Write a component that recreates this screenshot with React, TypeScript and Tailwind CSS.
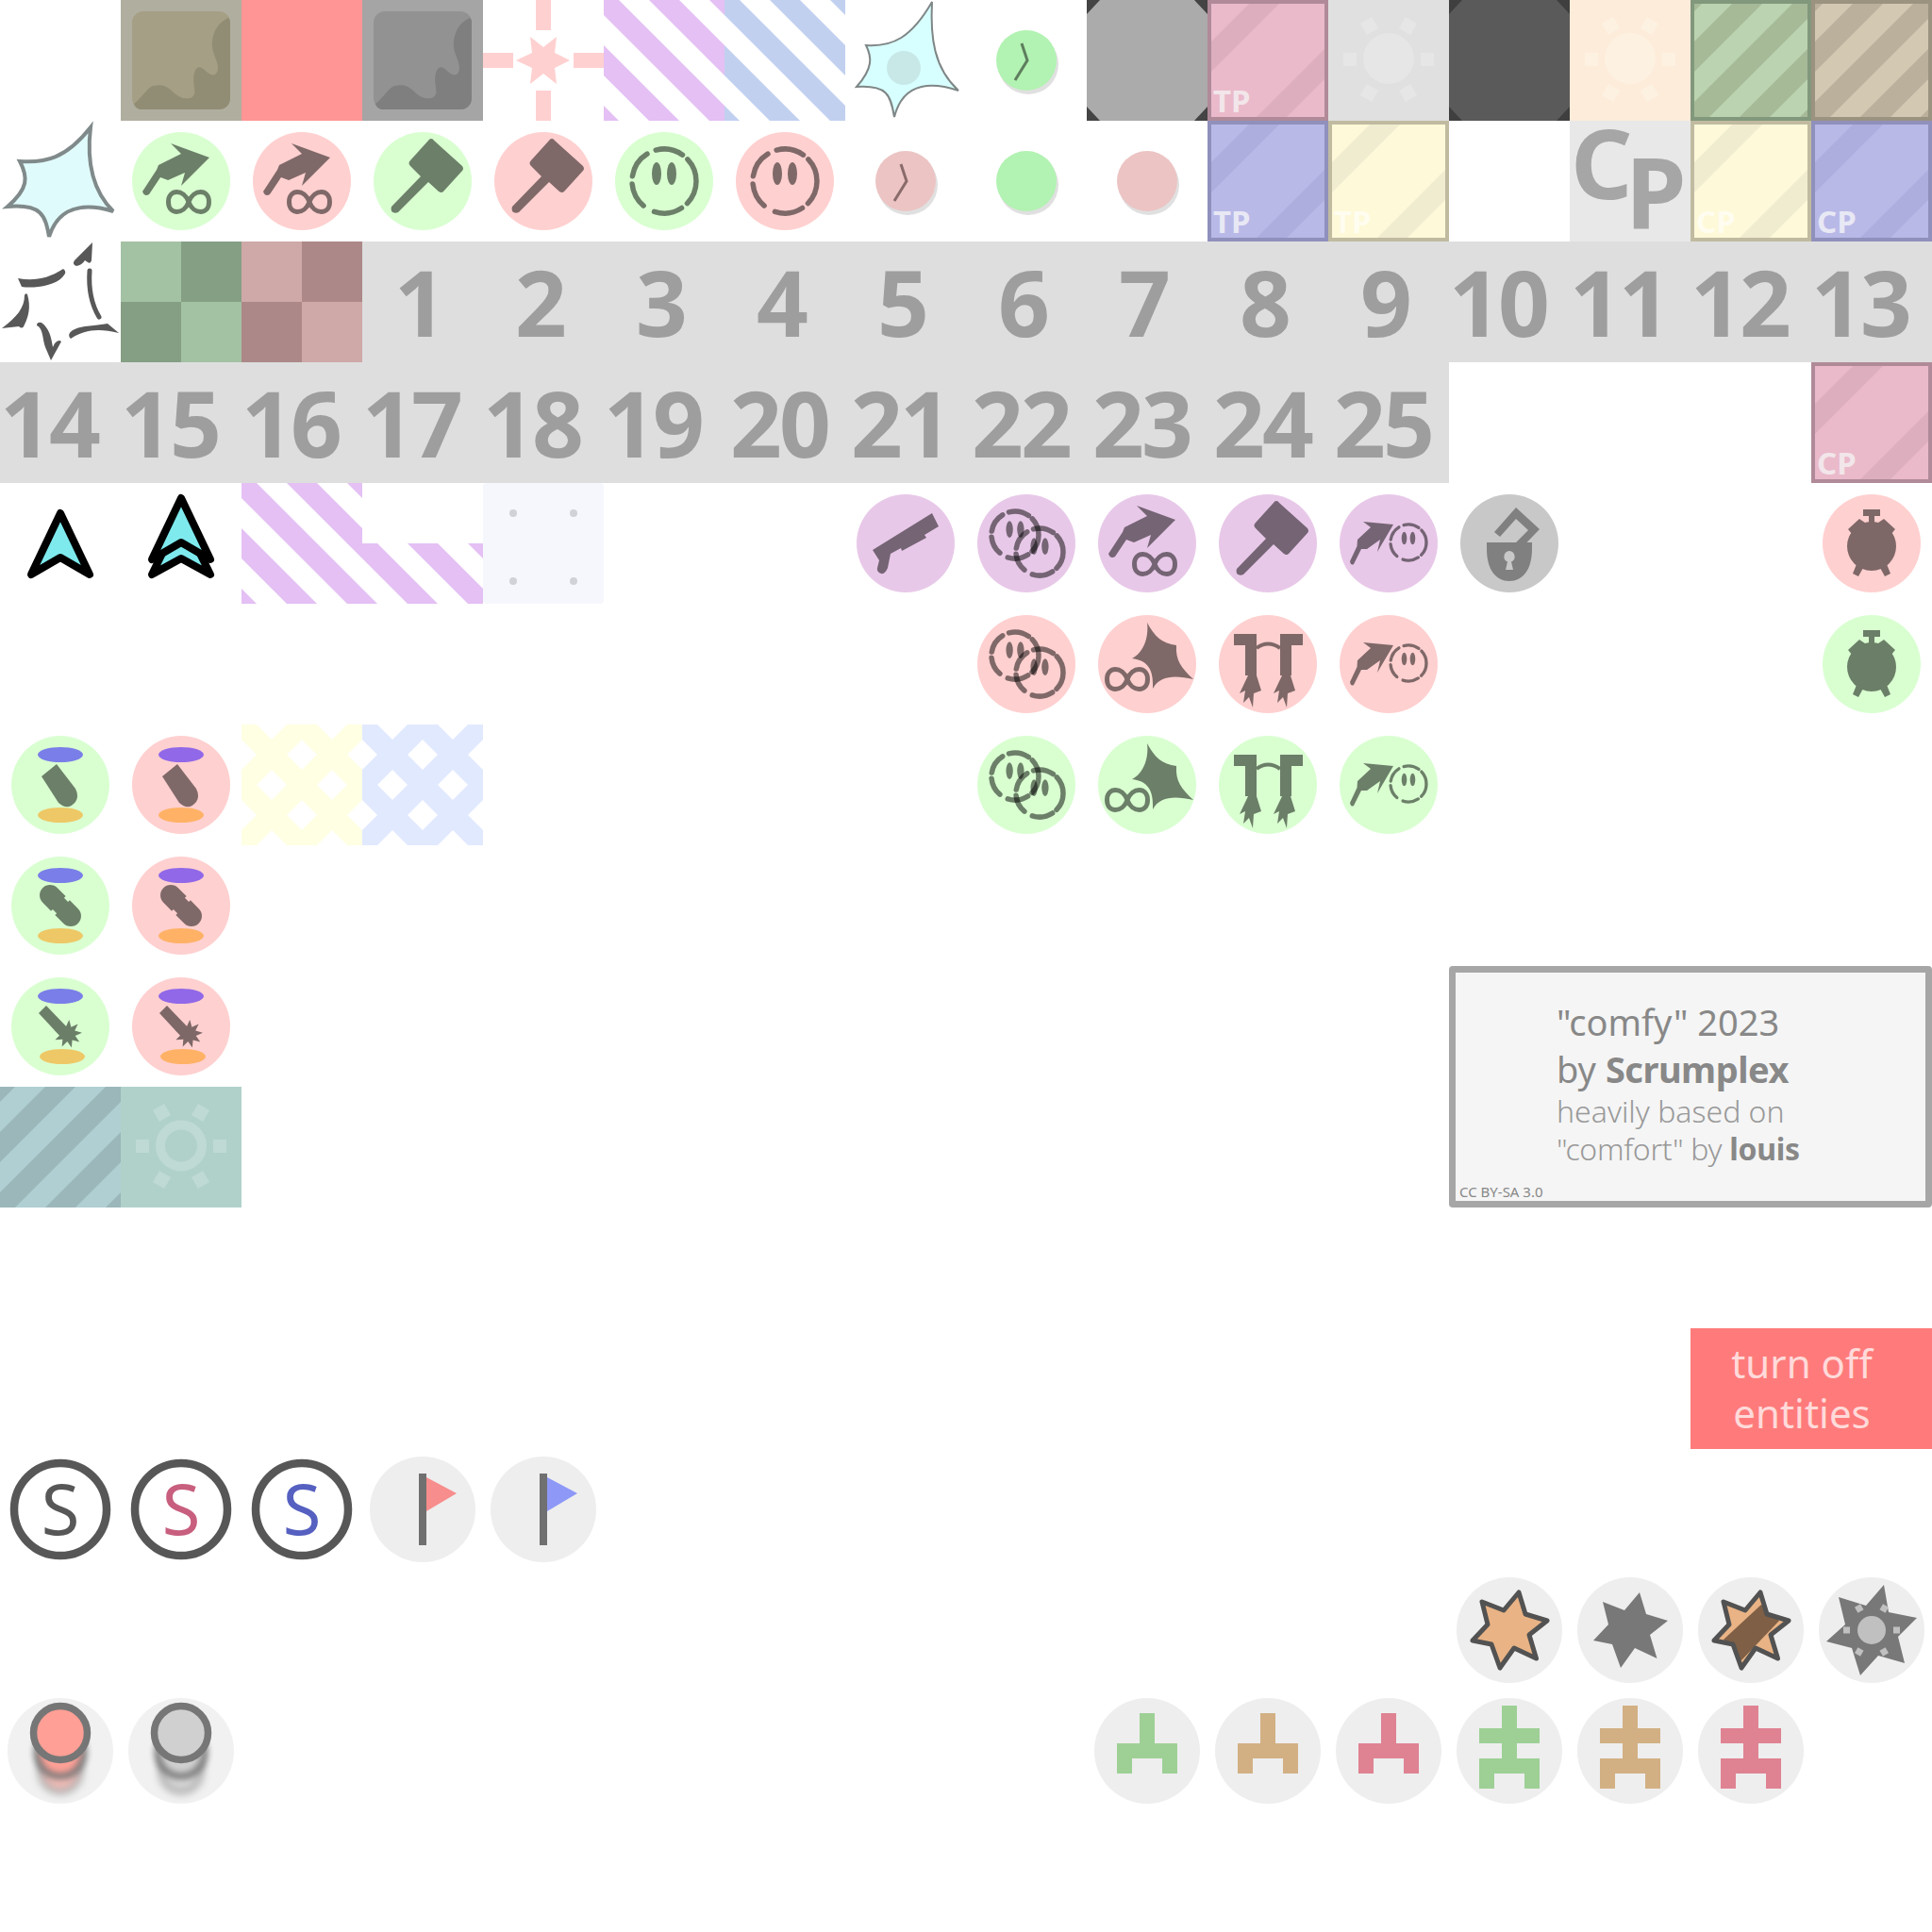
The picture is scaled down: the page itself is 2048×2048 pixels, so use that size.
import React from "react";

type P = { pos: string; children?: React.ReactNode };
const Art = ({ pos, children }: P) => (
  <svg viewBox="0 0 128 128" className={`block w-32 h-32 overflow-hidden ${pos}`}>{children}</svg>
);

const pol = (cx: number, cy: number, r: number, deg: number) => {
  const a = (deg * Math.PI) / 180;
  return [cx + r * Math.sin(a), cy - r * Math.cos(a)];
};
const arc = (cx: number, cy: number, r: number, a0: number, a1: number) => {
  const [x0, y0] = pol(cx, cy, r, a0);
  const [x1, y1] = pol(cx, cy, r, a1);
  return `M${x0} ${y0}A${r} ${r} 0 ${a1 - a0 > 180 ? 1 : 0} 1 ${x1} ${y1}`;
};
const burst = (cx: number, cy: number, R: number, r: number, n: number, rot = 0) =>
  Array.from({ length: n * 2 }, (_, i) => pol(cx, cy, i % 2 ? r : R, rot + (i * 180) / n).join(",")).join(" ");

const Lines = ({ c, dir, offs = [-128, -64, 0, 64, 128], w = 22.63 }: { c: string; dir: "down" | "up"; offs?: number[]; w?: number }) => (
  <g stroke={c} strokeWidth={w} fill="none">
    {offs.map((o) =>
      dir === "down" ? (
        <line key={o} x1={o - 20} y1={-20} x2={o + 148} y2={148} />
      ) : (
        <line key={o} x1={o + 20} y1={-20} x2={o - 148} y2={148} />
      ),
    )}
  </g>
);

const Sun = ({ c, ring, op = 1 }: { c: string; ring?: boolean; op?: number }) => (
  <g fill={c} opacity={op}>
    {ring ? (
      <circle cx={64} cy={62.5} r={22} fill="none" stroke={c} strokeWidth={10} />
    ) : (
      <circle cx={64} cy={62} r={27} />
    )}
    {[0, 60, 120, 180, 240, 300].map((a) => (
      <rect key={a} x={57} y={15} width={14} height={14} transform={`rotate(${a + 90} 64 63)`} />
    ))}
  </g>
);

const Disc = ({ c, r = 52 }: { c: string; r?: number }) => <circle cx={64} cy={64} r={r} fill={c} />;

const HAND = "M53 24L94 39L64 69L68 55L50 63L42 60L30 78Q25 81 23 75L38 52L40 47L64 35Z";
const Inf = ({ x, y }: { x: number; y: number }) => (
  <path
    transform={`translate(${x} ${y})`}
    d="M0 0C-5 -14 -21.5 -14 -21.5 0C-21.5 14 -5 14 0 0C5 -14 21.5 -14 21.5 0C21.5 14 5 14 0 0Z"
    fill="none"
    stroke="#000"
    strokeOpacity={0.5}
    strokeWidth={5}
  />
);
const HandInf = ({ bg }: { bg: string }) => (
  <>
    <Disc c={bg} />
    <path d={HAND} opacity={0.5} />
    <Inf x={72} y={86} />
  </>
);
const Hammer = ({ bg }: { bg: string }) => (
  <>
    <Disc c={bg} />
    <path
      d="M73 19Q75 19 76 21L106 48Q108 51 106 53L86 75Q84 77 81 75L70 65L38 97Q34 99 31 96Q30 93 31 91L62 59L51 48Q48 45 51 42L70 21Q71 19 73 19Z"
      opacity={0.5}
    />
  </>
);
const Face = ({ x, y, r, sw = 5.5 }: { x: number; y: number; r: number; sw?: number }) => {
  const s = r / 34;
  return (
    <g transform={`translate(${x} ${y}) scale(${s})`}>
      {[
        [-15, 35],
        [47, 134],
        [147, 198],
        [220, 265],
        [279, 328],
      ].map(([a, b]) => (
        <path key={a} d={arc(0, 0, 34, a, b)} fill="none" stroke="#000" strokeOpacity={0.5} strokeWidth={sw} strokeLinecap="round" />
      ))}
      <ellipse cx={-8} cy={-8} rx={5} ry={12} opacity={0.5} />
      <ellipse cx={8} cy={-8} rx={5} ry={12} opacity={0.5} />
    </g>
  );
};
const DoubleFace = ({ bg }: { bg: string }) => (
  <>
    <Disc c={bg} />
    <Face x={52} y={55} r={25} sw={7.5} />
    <Face x={78} y={73} r={25} sw={7.5} />
  </>
);
const HandFace = ({ bg }: { bg: string }) => (
  <>
    <Disc c={bg} />
    <path
      d="M37 41L69 44L52 73L55 60L41 70L35 70L27 86Q24 88 23 83L30.5 67L31 60L45 47Z"
      opacity={0.5}
    />
    <Face x={85} y={63} r={19} sw={6} />
  </>
);
const StarInf = ({ bg }: { bg: string }) => (
  <>
    <Disc c={bg} />
    <path d="M64 20C72 35 80 42 95 44C94 60 100 68 113 80C95 76 78 75 70 90C71 70 65 60 48 58C60 52 66 36 64 20Z" opacity={0.5} />
    <Inf x={43} y={80} />
  </>
);
const FLAME = "M43 76L34 95L40 92L38 105L44 99L48 110L49 95L57 92L52 76Z";
const Jets = ({ bg }: { bg: string }) => (
  <>
    <Disc c={bg} />
    <g opacity={0.5}>
      <path d="M28 32H52V76H40V44H28ZM77 32H101V44H89V76H77Z" />
      <path d={FLAME} />
      <path d={FLAME} transform="translate(36 0)" />
      <path d="M52 47Q64 38 77 47" fill="none" stroke="#000" strokeWidth={4} />
    </g>
  </>
);
const Alarm = ({ bg }: { bg: string }) => (
  <>
    <Disc c={bg} />
    <g opacity={0.5}>
      <path d="M55 28H73V35H67V42H61V35H55Z" />
      <circle cx={64} cy={67} r={26} />
      <path d="M51 38L39 49L48 60L60 44ZM77 38L89 49L80 60L68 44Z" />
      <path d="M48 86L44 96L50 99L55 90ZM80 86L84 96L78 99L73 90Z" />
    </g>
  </>
);
const Pods = ({ bg, a, b, by = 96, bx = 64, children }: { bg: string; a: string; b: string; by?: number; bx?: number; children: React.ReactNode }) => (
  <>
    <Disc c={bg} />
    <ellipse cx={64} cy={32} rx={24} ry={8} fill={a} />
    <ellipse cx={bx} cy={by} rx={24} ry={8} fill={b} />
    {children}
  </>
);
const Bullet = () => <path d="M60 42L44 55L62 83Q72 92 80 82Q84 76 80 68Z" opacity={0.5} />;
const Capsule = () => (
  <path
    transform="rotate(45 64 64)"
    d="M48.5 53H61V55.5H67V53H79.5A11 11 0 0 1 79.5 75H67V72.5H61V75H48.5A11 11 0 0 1 48.5 53Z"
    opacity={0.5}
  />
);
const Spark = () => (
  <g opacity={0.5}>
    <path d="M49 42L41 50L66 77L74 68Z" />
    <polygon points={burst(72, 72, 15, 8, 9, 5)} />
  </g>
);
const Clock = ({ c, hand }: { c: string; hand?: boolean }) => (
  <>
    <circle cx={66} cy={68} r={32} fill="#e0e0e0" />
    <circle cx={64} cy={64} r={32} fill={c} />
    {hand && <path d="M59 46L65 64L52 85" fill="none" stroke={c === "#b2f2b2" ? "#5e7d5e" : "#8a6b6b"} strokeWidth={3} />}
  </>
);
const Card = ({ bg, band, edge, label, labelC, offs }: { bg: string; band: string; edge: string; label?: string; labelC?: string; offs: number[] }) => (
  <>
    <rect width={128} height={128} fill={bg} />
    <Lines c={band} dir="up" offs={offs} />
    <rect x={2} y={2} width={124} height={124} fill="none" stroke={edge} strokeWidth={4} />
    {label && (
      <text x={6} y={119} fontSize={33} fontWeight={700} fill={labelC}>
        {label}
      </text>
    )}
  </>
);
const STAR = "M74 24L81 47L104 54L85 69L92.5 94L69 83L54 104L45 79L25 75L41 58L35 34L58 43Z";
const Num = ({ pos, n }: { pos: string; n: number }) => (
  <div
    className={`flex items-center justify-center bg-[#dedede] text-[96px] leading-none font-bold tracking-[-3px] text-[#9e9e9e] ${
      n < 10 ? "pr-[8px]" : n < 20 ? "pr-[24px]" : "pr-[12px]"
    } ${pos}`}
  >
    {n}
  </div>
);
const Orb = ({ fill }: { fill: string }) => (
  <>
    <Disc c="#f1f1f1" r={56} />
    <g className="blur-[4px]" opacity={0.6}>
      <circle cx={64} cy={86} r={21} fill={fill} stroke="#767676" strokeWidth={6} />
    </g>
    <g className="blur-[3px]" opacity={0.95}>
      <circle cx={64} cy={66} r={25} fill={fill} stroke="#767676" strokeWidth={7} />
    </g>
    <circle cx={64} cy={45} r={28.5} fill={fill} stroke="#767676" strokeWidth={7.5} />
  </>
);
const Flag = ({ c }: { c: string }) => (
  <>
    <Disc c="#eeeeee" r={56} />
    <rect x={60} y={26} width={8} height={76} fill="#707070" />
    <polygon points="68,30 100,47 68,66" fill={c} />
  </>
);
const Ess = ({ c }: { c: string }) => (
  <>
    <circle cx={64} cy={64} r={49} fill="#fff" stroke="#575757" strokeWidth={8.5} />
    <text x={64} y={91} fontSize={74} textAnchor="middle" fill={c}>
      S
    </text>
  </>
);
const One = ({ c }: { c: string }) => (
  <>
    <Disc c="#eeeeee" r={56} />
    <path d="M56 24H72V56H96V88H80V72H48V88H32V56H56Z" fill={c} />
  </>
);
const Two = ({ c }: { c: string }) => (
  <>
    <Disc c="#eeeeee" r={56} />
    <path d="M56 16H72V40H96V56H72V72H96V104H80V88H48V104H32V72H56V56H32V40H56Z" fill={c} />
  </>
);
const Corners = ({ c }: { c: string }) => (
  <path d="M0 0H14L0 15ZM128 0H114L128 15ZM0 128H14L0 113ZM128 128H114L128 113Z" fill={c} />
);
const STRIPES = (c: string) => <Lines c={c} dir="down" />;
const Lattice = ({ c }: { c: string }) => (
  <>
    <Lines c={c} dir="down" />
    <Lines c={c} dir="up" offs={[0, 64, 128, 192, 256]} />
  </>
);
const WAVE =
  "M114 19C100 25 96 40 97 50C98 60 108 72 100 79C92 82 86 66 80 73C74 82 80 96 78 100C74 108 62 104 56 98C46 88 38 90 32 92C26 96 20 106 14 110C16 116 20 116 24 116H104C112 116 116 110 116 104V24Q116 20 114 19Z";

export default function App() {
  const g = "#d9ffd1";
  const r = "#ffd0d0";
  const v = "#e8c8e8";
  const every = [0, 64, 128, 192, 256];
  const sparse = [64, 192];
  return (
    <div className="grid h-[2048px] w-[2048px] grid-cols-[repeat(16,128px)] grid-rows-[repeat(16,128px)] bg-white font-['Noto_Sans',sans-serif]">
      {/* row 0 */}
      <Art pos="col-start-2 row-start-1">
        <rect width={128} height={128} fill="#b0ae9f" />
        <rect x={12} y={12} width={104} height={104} rx={12} fill="#a59f85" />
        <path d={WAVE} fill="#918d75" />
      </Art>
      <div className="col-start-3 row-start-1 bg-[#ff9595]" />
      <Art pos="col-start-4 row-start-1">
        <rect width={128} height={128} fill="#a5a5a5" />
        <rect x={12} y={12} width={104} height={104} rx={12} fill="#929292" />
        <path d={WAVE} fill="#7f7f7f" />
      </Art>
      <Art pos="col-start-5 row-start-1">
        <path d="M56 0H72V32H56ZM56 96H72V128H56ZM0 56H32V72H0ZM96 56H128V72H96Z" fill="#ffd0d0" />
        <polygon points="50,39 64,50 78,39 76,56 92,64 76,72 78,89 64,78 50,89 52,72 35,64 52,56" fill="#ffd0d0" />
      </Art>
      <Art pos="col-start-6 row-start-1">{STRIPES("#e4c0f4")}</Art>
      <Art pos="col-start-7 row-start-1">{STRIPES("#c2d0f0")}</Art>
      <Art pos="col-start-8 row-start-1">
        <path d="M92 2C90 40 94 72 120 96C96 88 62 84 52 124C48 100 44 90 12 92C30 72 28 60 22 48C50 50 70 40 92 2Z" fill="#d8ffff" stroke="#7f8686" strokeWidth={2} />
        <circle cx={62} cy={72} r={18} fill="#c8e8e8" />
      </Art>
      <Art pos="col-start-9 row-start-1">
        <Clock c="#b2f2b2" hand />
      </Art>
      <Art pos="col-start-10 row-start-1">
        <rect width={128} height={128} fill="#ababab" />
        <Corners c="#444444" />
      </Art>
      <Art pos="col-start-11 row-start-1">
        <Card bg="#eabacb" band="#ddaebe" edge="#b08a98" label="TP" labelC="#f2e6ea" offs={sparse} />
      </Art>
      <Art pos="col-start-12 row-start-1">
        <rect width={128} height={128} fill="#e0e0e0" />
        <Sun c="#e6e6e6" />
      </Art>
      <Art pos="col-start-13 row-start-1">
        <rect width={128} height={128} fill="#5a5a5a" />
        <Corners c="#3f3f3f" />
      </Art>
      <Art pos="col-start-14 row-start-1">
        <rect width={128} height={128} fill="#fdecd9" />
        <Sun c="#fdf1e2" />
      </Art>
      <Art pos="col-start-15 row-start-1">
        <Card bg="#bbd3b0" band="#a6ba98" edge="#82987c" offs={every} />
      </Art>
      <Art pos="col-start-16 row-start-1">
        <Card bg="#d3c8b2" band="#bab09b" edge="#9b9280" offs={every} />
      </Art>

      {/* row 1 */}
      <Art pos="col-start-1 row-start-2">
        <path d="M96 7C92 40 96 72 120 96C100 90 64 84 52 123C48 100 44 88 8 91C30 72 30 60 21 43C48 45 70 40 96 7Z" fill="#e0fbfb" stroke="#808a8a" strokeWidth={4} />
      </Art>
      <Art pos="col-start-2 row-start-2"><HandInf bg={g} /></Art>
      <Art pos="col-start-3 row-start-2"><HandInf bg={r} /></Art>
      <Art pos="col-start-4 row-start-2"><Hammer bg={g} /></Art>
      <Art pos="col-start-5 row-start-2"><Hammer bg={r} /></Art>
      <Art pos="col-start-6 row-start-2"><Disc c={g} /><Face x={64} y={64} r={34} /></Art>
      <Art pos="col-start-7 row-start-2"><Disc c={r} /><Face x={64} y={64} r={34} /></Art>
      <Art pos="col-start-8 row-start-2"><Clock c="#ecc4c4" hand /></Art>
      <Art pos="col-start-9 row-start-2"><Clock c="#b2f2b2" /></Art>
      <Art pos="col-start-10 row-start-2"><Clock c="#ecc4c4" /></Art>
      <Art pos="col-start-11 row-start-2">
        <Card bg="#b9b9e8" band="#adadde" edge="#9090bc" label="TP" labelC="#e8e8f5" offs={sparse} />
      </Art>
      <Art pos="col-start-12 row-start-2">
        <Card bg="#fef9d8" band="#f0ecd0" edge="#c0bba0" label="TP" labelC="#fffdf0" offs={sparse} />
      </Art>
      <svg viewBox="0 0 128 128" className="col-start-14 row-start-2 block h-32 w-32 overflow-visible bg-[#e8e8e8]">
        <text x={1} y={83} fontSize={102} fontWeight={700} fill="#a6a6a6">C</text>
        <text x={59} y={114} fontSize={104} fontWeight={700} fill="#a6a6a6">P</text>
      </svg>
      <Art pos="col-start-15 row-start-2">
        <Card bg="#fef9d8" band="#f0ecd0" edge="#c0bba0" label="CP" labelC="#fffdf0" offs={sparse} />
      </Art>
      <Art pos="col-start-16 row-start-2">
        <Card bg="#b9b9e8" band="#adadde" edge="#9090bc" label="CP" labelC="#e8e8f5" offs={sparse} />
      </Art>

      {/* row 2 */}
      <Art pos="col-start-1 row-start-3">
        <g fill="#585858">
          <path d="M98 1L97 20Q96 24 93 22L90 20Q87 25 81 26Q76 24 79 20Z" />
          <path d="M95 31Q93 60 105 80" fill="none" stroke="#585858" strokeWidth={5} strokeLinecap="round" />
          <path d="M114 87L126 97C105 92 90 93 75 103C70 98 76 92 90 90C100 89 108 88 114 87Z" />
          <path d="M39 89C46 92 45 104 48 112L54 126L65 106Q62 103 58 108L56 112C54 100 52 92 44 86Q39 85 39 89Z" />
          <path d="M29 56C33 70 30 80 26 88Q24 94 20 90L2 92C18 80 26 70 26 57Q27 54 29 56Z" />
          <path d="M19 39C35 42 50 40 67 29Q72 32 66 38C58 47 35 50 23 48Z" />
        </g>
      </Art>
      <Art pos="col-start-2 row-start-3">
        <rect width={128} height={128} fill="#a3c1a3" />
        <path d="M64 0H128V64H64ZM0 64H64V128H0Z" fill="#859f85" />
      </Art>
      <Art pos="col-start-3 row-start-3">
        <rect width={128} height={128} fill="#cfa8a8" />
        <path d="M64 0H128V64H64ZM0 64H64V128H0Z" fill="#ac8888" />
      </Art>
      <Num pos="col-start-4 row-start-3" n={1} />
      <Num pos="col-start-5 row-start-3" n={2} />
      <Num pos="col-start-6 row-start-3" n={3} />
      <Num pos="col-start-7 row-start-3" n={4} />
      <Num pos="col-start-8 row-start-3" n={5} />
      <Num pos="col-start-9 row-start-3" n={6} />
      <Num pos="col-start-10 row-start-3" n={7} />
      <Num pos="col-start-11 row-start-3" n={8} />
      <Num pos="col-start-12 row-start-3" n={9} />
      <Num pos="col-start-13 row-start-3" n={10} />
      <Num pos="col-start-14 row-start-3" n={11} />
      <Num pos="col-start-15 row-start-3" n={12} />
      <Num pos="col-start-16 row-start-3" n={13} />

      {/* row 3 */}
      <Num pos="col-start-1 row-start-4" n={14} />
      <Num pos="col-start-2 row-start-4" n={15} />
      <Num pos="col-start-3 row-start-4" n={16} />
      <Num pos="col-start-4 row-start-4" n={17} />
      <Num pos="col-start-5 row-start-4" n={18} />
      <Num pos="col-start-6 row-start-4" n={19} />
      <Num pos="col-start-7 row-start-4" n={20} />
      <Num pos="col-start-8 row-start-4" n={21} />
      <Num pos="col-start-9 row-start-4" n={22} />
      <Num pos="col-start-10 row-start-4" n={23} />
      <Num pos="col-start-11 row-start-4" n={24} />
      <Num pos="col-start-12 row-start-4" n={25} />
      <Art pos="col-start-16 row-start-4">
        <Card bg="#eabacb" band="#ddaebe" edge="#b08a98" label="CP" labelC="#f2e6ea" offs={sparse} />
      </Art>

      {/* row 4 */}
      <Art pos="col-start-1 row-start-5">
        <path d="M64 32L95 97L64 79L33 97Z" fill="#7eeaee" stroke="#000" strokeWidth={8} strokeLinejoin="round" />
      </Art>
      <Art pos="col-start-2 row-start-5">
        <path d="M64 34L95 97L64 80L33 97Z" fill="#7eeaee" stroke="#000" strokeWidth={8} strokeLinejoin="round" />
        <path d="M64 16L95 81L64 63L33 81Z" fill="#7eeaee" stroke="#000" strokeWidth={8} strokeLinejoin="round" />
      </Art>
      <Art pos="col-start-3 row-start-5">{STRIPES("#e4c0f4")}</Art>
      <div className="col-start-4 row-start-5 mt-16 h-16 overflow-hidden">
        <svg viewBox="0 64 128 64" className="block h-16 w-32">{STRIPES("#e4c0f4")}</svg>
      </div>
      <Art pos="col-start-5 row-start-5">
        <rect width={128} height={128} rx={4} fill="#f6f7fc" />
        <g fill="#d0d2d8">
          <circle cx={32} cy={32} r={4} />
          <circle cx={96} cy={32} r={4} />
          <circle cx={32} cy={104} r={4} />
          <circle cx={96} cy={104} r={4} />
        </g>
      </Art>
      <Art pos="col-start-8 row-start-5">
        <Disc c={v} />
        <path d="M92 32L99 46L84 55L86 58L60 72L59 69L48 75L45 90Q42 97 38 96Q33 94 34 90L36 82L29 71Z" opacity={0.5} />
      </Art>
      <Art pos="col-start-9 row-start-5"><DoubleFace bg={v} /></Art>
      <Art pos="col-start-10 row-start-5"><HandInf bg={v} /></Art>
      <Art pos="col-start-11 row-start-5"><Hammer bg={v} /></Art>
      <Art pos="col-start-12 row-start-5"><HandFace bg={v} /></Art>
      <Art pos="col-start-13 row-start-5">
        <Disc c="#c8c8c8" />
        <g fill="#808080">
          <path d="M48 52L71 26L96 49L82.5 63H71L84 50L71 38L54 57Z" />
          <path fillRule="evenodd" d="M40 63H88V70C88 92 78 104 64 104C50 104 40 92 40 70ZM64 72A6 6 0 0 0 62 83.5L60 92H68L66 83.5A6 6 0 0 0 64 72Z" />
        </g>
      </Art>
      <Art pos="col-start-16 row-start-5"><Alarm bg={r} /></Art>

      {/* row 5 */}
      <Art pos="col-start-9 row-start-6"><DoubleFace bg={r} /></Art>
      <Art pos="col-start-10 row-start-6"><StarInf bg={r} /></Art>
      <Art pos="col-start-11 row-start-6"><Jets bg={r} /></Art>
      <Art pos="col-start-12 row-start-6"><HandFace bg={r} /></Art>
      <Art pos="col-start-16 row-start-6"><Alarm bg={g} /></Art>

      {/* row 6 */}
      <Art pos="col-start-1 row-start-7"><Pods bg={g} a="#7a7ee8" b="#eec866"><Bullet /></Pods></Art>
      <Art pos="col-start-2 row-start-7"><Pods bg={r} a="#9068e8" b="#ffb266"><Bullet /></Pods></Art>
      <Art pos="col-start-3 row-start-7"><Lattice c="#ffffe3" /></Art>
      <Art pos="col-start-4 row-start-7"><Lattice c="#e1e9ff" /></Art>
      <Art pos="col-start-9 row-start-7"><DoubleFace bg={g} /></Art>
      <Art pos="col-start-10 row-start-7"><StarInf bg={g} /></Art>
      <Art pos="col-start-11 row-start-7"><Jets bg={g} /></Art>
      <Art pos="col-start-12 row-start-7"><HandFace bg={g} /></Art>

      {/* row 7 */}
      <Art pos="col-start-1 row-start-8"><Pods bg={g} a="#7a7ee8" b="#eec866"><Capsule /></Pods></Art>
      <Art pos="col-start-2 row-start-8"><Pods bg={r} a="#9068e8" b="#ffb266"><Capsule /></Pods></Art>

      {/* row 8 */}
      <Art pos="col-start-1 row-start-9"><Pods bg={g} a="#7a7ee8" b="#eec866" bx={66}><Spark /></Pods></Art>
      <Art pos="col-start-2 row-start-9"><Pods bg={r} a="#9068e8" b="#ffb266" bx={66}><Spark /></Pods></Art>
      <div className="col-start-13 col-span-4 row-start-9 row-span-2 flex flex-col rounded-[4px] border-[7px] border-[#a6a6a6] bg-[#f5f5f5] pl-[107px] pt-[27px] text-[#888888]">
        <div className="h-[50px] text-[38px] leading-[50px]">&quot;comfy&quot; 2023</div>
        <div className="h-[50px] text-[38px] leading-[50px]">by <b className="font-bold tracking-[-0.5px]">Scrumplex</b></div>
        <div className="h-[40px] text-[32px] font-light leading-[40px] text-[#999999]">heavily based on</div>
        <div className="h-[40px] text-[32px] font-light leading-[40px] tracking-[-0.3px] text-[#999999]">&quot;comfort&quot; by <b className="font-bold text-[#888888]">louis</b></div>
        <div className="-ml-[103px] mt-auto text-[15px] leading-[20px]">CC BY-SA 3.0</div>
      </div>

      {/* row 9 */}
      <Art pos="col-start-1 row-start-10">
        <rect width={128} height={128} fill="#afcfd3" />
        <Lines c="#9bb7ba" dir="up" offs={every} />
      </Art>
      <Art pos="col-start-2 row-start-10">
        <rect width={128} height={128} fill="#b0d1c9" />
        <Sun c="#bfdad4" ring />
      </Art>

      {/* row 11 */}
      <div className="col-start-15 col-span-2 row-start-12 bg-[#ff7b7b] pr-[20px] pt-[10px] text-center text-[42px] leading-[53px] text-[#ffdada]">
        turn off<br />entities
      </div>

      {/* row 12 */}
      <Art pos="col-start-1 row-start-13"><Ess c="#575757" /></Art>
      <Art pos="col-start-2 row-start-13"><Ess c="#c85f7f" /></Art>
      <Art pos="col-start-3 row-start-13"><Ess c="#5560c0" /></Art>
      <Art pos="col-start-4 row-start-13"><Flag c="#f78d8d" /></Art>
      <Art pos="col-start-5 row-start-13"><Flag c="#8d98f7" /></Art>

      {/* row 13 */}
      <Art pos="col-start-13 row-start-14">
        <Disc c="#eeeeee" r={56} />
        <path d={STAR} fill="#e9b385" stroke="#525252" strokeWidth={5} strokeLinejoin="round" />
      </Art>
      <Art pos="col-start-14 row-start-14">
        <Disc c="#eeeeee" r={56} />
        <path d={STAR} fill="#787878" />
      </Art>
      <Art pos="col-start-15 row-start-14">
        <Disc c="#eeeeee" r={56} />
        <clipPath id="star-clip"><path d={STAR} /></clipPath>
        <path d={STAR} fill="#e9b385" />
        <polygon points="75,37 94,54 54,96 35,74" fill="#7f5f45" clipPath="url(#star-clip)" />
        <path d={STAR} fill="none" stroke="#525252" strokeWidth={5} strokeLinejoin="round" />
      </Art>
      <Art pos="col-start-16 row-start-14">
        <Disc c="#eeeeee" r={56} />
        <path d="M77 16L82 45L112 51L92 71L99 99L71 91L52 112L43 83L16 76L36 58L29 29L58 38Z" fill="#787878" />
        <circle cx={64} cy={64} r={15} fill="#c0c0c0" />
        {[0, 60, 120, 180, 240, 300].map((a) => (
          <rect key={a} x={60.5} y={34} width={7} height={7} fill="#c0c0c0" transform={`rotate(${a + 90} 64 64)`} />
        ))}
      </Art>

      {/* row 14 */}
      <Art pos="col-start-1 row-start-15"><Orb fill="#ff9f95" /></Art>
      <Art pos="col-start-2 row-start-15"><Orb fill="#d0d0d0" /></Art>
      <Art pos="col-start-10 row-start-15"><One c="#9ed096" /></Art>
      <Art pos="col-start-11 row-start-15"><One c="#d2b084" /></Art>
      <Art pos="col-start-12 row-start-15"><One c="#df8292" /></Art>
      <Art pos="col-start-13 row-start-15"><Two c="#9ed096" /></Art>
      <Art pos="col-start-14 row-start-15"><Two c="#d2b084" /></Art>
      <Art pos="col-start-15 row-start-15"><Two c="#df8292" /></Art>
    </div>
  );
}
